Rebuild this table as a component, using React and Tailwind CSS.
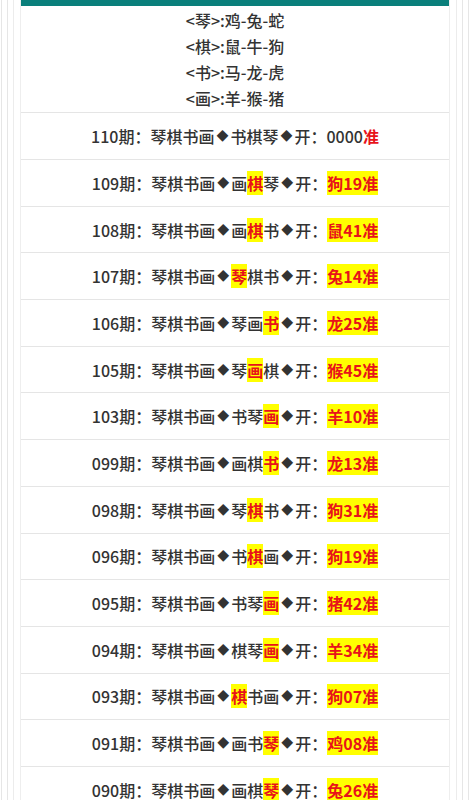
import React from 'react';

const groups = [
  ['琴', '鸡-兔-蛇'],
  ['棋', '鼠-牛-狗'],
  ['书', '马-龙-虎'],
  ['画', '羊-猴-猪'],
];

// period, picks, highlighted index, result
const rows = [
  ['109', '画棋琴', 1, '狗19'],
  ['108', '画棋书', 1, '鼠41'],
  ['107', '琴棋书', 0, '兔14'],
  ['106', '琴画书', 2, '龙25'],
  ['105', '琴画棋', 1, '猴45'],
  ['103', '书琴画', 2, '羊10'],
  ['099', '画棋书', 2, '龙13'],
  ['098', '琴棋书', 1, '狗31'],
  ['096', '书棋画', 1, '狗19'],
  ['095', '书琴画', 2, '猪42'],
  ['094', '棋琴画', 2, '羊34'],
  ['093', '棋书画', 0, '狗07'],
  ['091', '画书琴', 2, '鸡08'],
  ['090', '画棋琴', 2, '兔26'],
];

const font = { fontFamily: '"Noto Sans CJK SC", "Noto Sans", sans-serif' };

const Dot = () => <span className="text-[12px] mx-[2px]">◆</span>;

const App = () => {
  return (
    <div className="bg-white min-h-screen" style={font}>
      <div className="mx-[1px] border-x border-[#e6e6e6] px-[5px]">
        <div className="border-x border-[#e6e6e6] px-[5px]">
          <div className="border-x border-[#ececec] px-[6px]">
            <div className="border-x border-[#eeeeee]">
              <div className="h-[6px] bg-[#0a7f7b]"></div>

              {/* groups */}
              <div className="pt-[1px] pb-[1px] border-b border-[#e5e5e5] text-center text-[16px] leading-[26px] font-medium text-[#333]">
                {groups.map(([k, v]) => (
                  <div key={k}>&lt;{k}&gt;:{v}</div>
                ))}
              </div>

              {/* latest */}
              <div className="h-[47px] border-b border-[#e5e5e5] flex items-center justify-center text-[16px] font-medium text-[#333]">
                110期：琴棋书画<Dot />书棋琴<Dot />开：0000<span className="text-[#e8131a] font-bold">准</span>
              </div>

              {rows.map(([p, picks, hi, res]) => (
                <div
                  key={p}
                  className="h-[46.7px] border-b border-[#e5e5e5] flex items-center justify-center text-[16px] font-medium text-[#333]"
                >
                  {p}期：琴棋书画<Dot />
                  {picks.split('').map((c, i) =>
                    i === hi ? (
                      <span key={i} className="bg-[#ffff00] text-[#e8131a] font-bold">{c}</span>
                    ) : (
                      <span key={i}>{c}</span>
                    )
                  )}
                  <Dot />开：
                  <span className="bg-[#ffff00] text-[#e8131a] font-bold">{res}准</span>
                </div>
              ))}
            </div>
          </div>
        </div>
      </div>
    </div>
  );
};

export default App;
